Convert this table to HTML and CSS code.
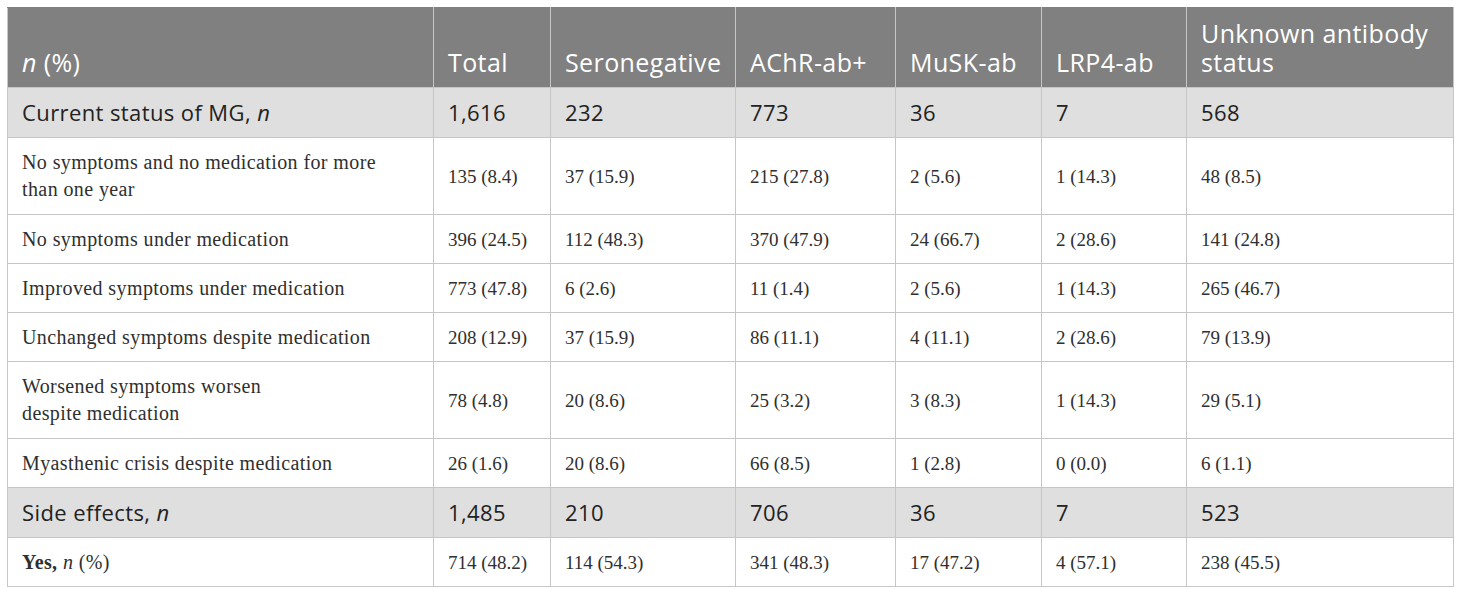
FILE: index.html
```html
<!DOCTYPE html>
<html lang="en">
<head>
    <meta charset="UTF-8">
    <title>Current status of MG</title>
    <link rel="stylesheet" href="styles.css">
</head>
<body>
    <table class="data-table">
        <colgroup>
            <col class="col-label">
            <col class="col-total">
            <col class="col-sero">
            <col class="col-achr">
            <col class="col-musk">
            <col class="col-lrp4">
            <col class="col-unknown">
        </colgroup>
        <thead>
            <tr>
                <th><em>n</em> (%)</th>
                <th>Total</th>
                <th>Seronegative</th>
                <th>AChR-ab+</th>
                <th>MuSK-ab</th>
                <th>LRP4-ab</th>
                <th>Unknown antibody status</th>
            </tr>
        </thead>
        <tbody>
            <tr class="group">
                <td>Current status of MG, <em>n</em></td>
                <td>1,616</td>
                <td>232</td>
                <td>773</td>
                <td>36</td>
                <td>7</td>
                <td>568</td>
            </tr>
            <tr class="tall">
                <td>No symptoms and no medication for more<br>than one year</td>
                <td>135 (8.4)</td>
                <td>37 (15.9)</td>
                <td>215 (27.8)</td>
                <td>2 (5.6)</td>
                <td>1 (14.3)</td>
                <td>48 (8.5)</td>
            </tr>
            <tr>
                <td>No symptoms under medication</td>
                <td>396 (24.5)</td>
                <td>112 (48.3)</td>
                <td>370 (47.9)</td>
                <td>24 (66.7)</td>
                <td>2 (28.6)</td>
                <td>141 (24.8)</td>
            </tr>
            <tr>
                <td>Improved symptoms under medication</td>
                <td>773 (47.8)</td>
                <td>6 (2.6)</td>
                <td>11 (1.4)</td>
                <td>2 (5.6)</td>
                <td>1 (14.3)</td>
                <td>265 (46.7)</td>
            </tr>
            <tr>
                <td>Unchanged symptoms despite medication</td>
                <td>208 (12.9)</td>
                <td>37 (15.9)</td>
                <td>86 (11.1)</td>
                <td>4 (11.1)</td>
                <td>2 (28.6)</td>
                <td>79 (13.9)</td>
            </tr>
            <tr class="tall">
                <td>Worsened symptoms worsen<br>despite medication</td>
                <td>78 (4.8)</td>
                <td>20 (8.6)</td>
                <td>25 (3.2)</td>
                <td>3 (8.3)</td>
                <td>1 (14.3)</td>
                <td>29 (5.1)</td>
            </tr>
            <tr>
                <td>Myasthenic crisis despite medication</td>
                <td>26 (1.6)</td>
                <td>20 (8.6)</td>
                <td>66 (8.5)</td>
                <td>1 (2.8)</td>
                <td>0 (0.0)</td>
                <td>6 (1.1)</td>
            </tr>
            <tr class="group">
                <td>Side effects, <em>n</em></td>
                <td>1,485</td>
                <td>210</td>
                <td>706</td>
                <td>36</td>
                <td>7</td>
                <td>523</td>
            </tr>
            <tr>
                <td><strong>Yes,</strong> <em>n</em> (%)</td>
                <td>714 (48.2)</td>
                <td>114 (54.3)</td>
                <td>341 (48.3)</td>
                <td>17 (47.2)</td>
                <td>4 (57.1)</td>
                <td>238 (45.5)</td>
            </tr>
        </tbody>
    </table>
</body>
</html>
```

FILE: styles.css
```css
body {
    margin: 0;
    padding: 7px 0 0 7px;
    background: #fff;
    font-family: "Liberation Serif", "Times New Roman", serif;
    color: #2f2f2f;
}

.data-table {
    border-collapse: collapse;
    table-layout: fixed;
    width: 1446px;
    border: 1px solid #c6c6c6;
}

.col-label { width: 426px; }
.col-total { width: 117px; }
.col-sero { width: 185px; }
.col-achr { width: 160px; }
.col-musk { width: 146px; }
.col-lrp4 { width: 145px; }
.col-unknown { width: 267px; }

.data-table th,
.data-table td {
    border: 1px solid #c6c6c6;
    text-align: left;
    padding: 0 14px;
}

.data-table th {
    background: #7f807f;
    color: #fff;
    font-family: "Open Sans", "Liberation Sans", sans-serif;
    font-weight: 400;
    font-size: 25px;
    letter-spacing: 0.4px;
    line-height: 29px;
    height: 80px;
    vertical-align: bottom;
    padding-bottom: 10px;
    border-top-color: #7f807f;
    box-sizing: border-box;
}

.data-table td {
    font-size: 20px;
    letter-spacing: 0.4px;
    line-height: 27px;
    height: 48px;
    vertical-align: middle;
}

.data-table td + td {
    font-size: 19px;
    letter-spacing: 0;
}

.data-table tr.tall td {
    height: 76px;
}

.data-table tr.group td {
    background: #dfdfdf;
    font-family: "Open Sans", "Liberation Sans", sans-serif;
    font-size: 22px;
    letter-spacing: 0.4px;
    color: #222;
    height: 49px;
}
```
